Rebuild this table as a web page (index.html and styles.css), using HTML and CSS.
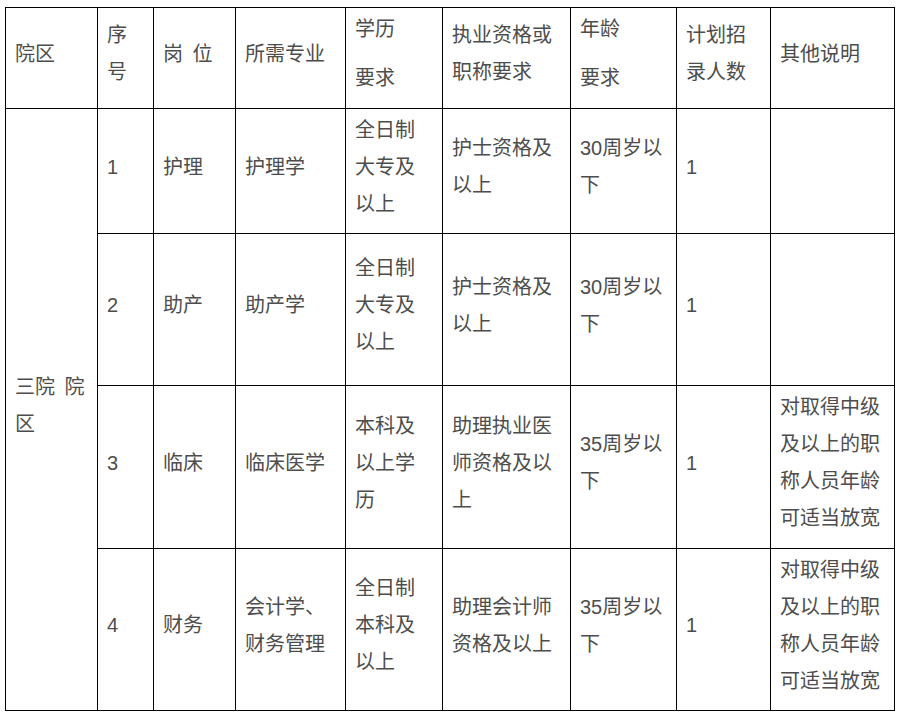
FILE: index.html
```html
<!DOCTYPE html>
<html lang="zh-CN">
<head>
<meta charset="utf-8">
<title>招聘岗位</title>
<link rel="stylesheet" href="styles.css">
</head>
<body>
<table class="jobs">
  <colgroup>
    <col class="c1"><col class="c2"><col class="c3"><col class="c4"><col class="c5"><col class="c6"><col class="c7"><col class="c8"><col class="c9">
  </colgroup>
  <tr class="r-head">
    <td>院区</td>
    <td>序号</td>
    <td>岗 位</td>
    <td>所需专业</td>
    <td><div class="para">学历</div><div class="para">要求</div></td>
    <td>执业资格或职称要求</td>
    <td><div class="para">年龄</div><div class="para">要求</div></td>
    <td>计划招录人数</td>
    <td>其他说明</td>
  </tr>
  <tr class="r1">
    <td rowspan="4" class="site">三院 院区</td>
    <td>1</td>
    <td>护理</td>
    <td>护理学</td>
    <td>全日制大专及以上</td>
    <td>护士资格及以上</td>
    <td>30周岁以下</td>
    <td>1</td>
    <td></td>
  </tr>
  <tr class="r2">
    <td>2</td>
    <td>助产</td>
    <td>助产学</td>
    <td>全日制大专及以上</td>
    <td>护士资格及以上</td>
    <td>30周岁以下</td>
    <td>1</td>
    <td></td>
  </tr>
  <tr class="r3">
    <td>3</td>
    <td>临床</td>
    <td>临床医学</td>
    <td>本科及以上学历</td>
    <td>助理执业医师资格及以上</td>
    <td>35周岁以下</td>
    <td>1</td>
    <td>对取得中级及以上的职称人员年龄可适当放宽</td>
  </tr>
  <tr class="r4">
    <td>4</td>
    <td>财务</td>
    <td>会计学、财务管理</td>
    <td>全日制本科及以上</td>
    <td>助理会计师资格及以上</td>
    <td>35周岁以下</td>
    <td>1</td>
    <td>对取得中级及以上的职称人员年龄可适当放宽</td>
  </tr>
</table>
</body>
</html>
```
FILE: styles.css
```css
html, body {
  margin: 0;
  padding: 0;
  background: #ffffff;
}

body {
  padding: 7px 0 0 5px;
  font-family: "Liberation Sans", "Noto Sans CJK SC", sans-serif;
  color: #4d4d4d;
}

.jobs {
  border-collapse: collapse;
  table-layout: fixed;
  width: 889px;
  font-size: 20px;
  line-height: 37px;
  word-spacing: 4px;
}

.jobs td {
  border: 1.5px solid #000000;
  padding: 0 8px 8px 9px;
  vertical-align: middle;
  text-align: left;
  word-break: break-all;
}

.c1 { width: 92px; }
.c2 { width: 56px; }
.c3 { width: 82px; }
.c4 { width: 110px; }
.c5 { width: 97px; }
.c6 { width: 128px; }
.c7 { width: 106px; }
.c8 { width: 94px; }
.c9 { width: 124px; }

.r-head { height: 101px; }
.r1 { height: 125px; }
.r2 { height: 152px; }
.r3 { height: 163px; }
.r4 { height: 162px; }

.para + .para {
  margin-top: 12px;
}
```
